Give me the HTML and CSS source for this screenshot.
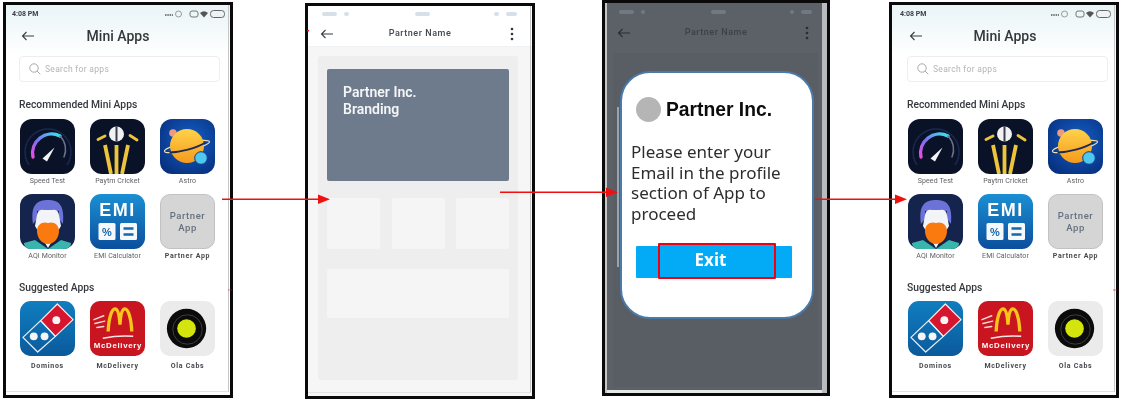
FILE: index.html
```html
<!DOCTYPE html>
<html lang="en">
<head>
<meta charset="utf-8">
<title>Partner mini app flow</title>
<link rel="stylesheet" href="styles.css">
</head>
<body>
<svg class="defs" width="0" height="0" aria-hidden="true">
  <defs>
    <linearGradient id="gaugeGrad" gradientUnits="userSpaceOnUse" x1="12" y1="38" x2="40" y2="14">
      <stop offset="0" stop-color="#f04be0"/><stop offset=".4" stop-color="#7b6ff5"/><stop offset="1" stop-color="#35ecec"/>
    </linearGradient>
    <linearGradient id="blueGrad" x1="0" y1="0" x2="0" y2="1">
      <stop offset="0" stop-color="#1b8fd2"/><stop offset="1" stop-color="#0b4f9e"/>
    </linearGradient>
    <linearGradient id="domGrad" x1="0" y1="0" x2="0" y2="1">
      <stop offset="0" stop-color="#0f7ebf"/><stop offset="1" stop-color="#0b5a9c"/>
    </linearGradient>
    <radialGradient id="astroGrad" cx=".55" cy=".4" r=".7">
      <stop offset="0" stop-color="#1560c8"/><stop offset="1" stop-color="#07307f"/>
    </radialGradient>
    <linearGradient id="planetGrad" x1="0" y1="0" x2="0" y2="1">
      <stop offset="0" stop-color="#ffd24a"/><stop offset="1" stop-color="#f59a1c"/>
    </linearGradient>
    <symbol id="i-speed" viewBox="0 0 55 55">
      <rect width="55" height="55" rx="12" fill="#0a1228"/>
      <path d="M9 46A23 23 0 1 1 47 46" fill="none" stroke="#1a2850" stroke-width="1.500"/>
      <path d="M13 38A19 19 0 0 1 40 17" fill="none" stroke="url(#gaugeGrad)" stroke-width="3.400" stroke-linecap="round"/>
      <path d="M40 17A19 19 0 0 1 44 38" fill="none" stroke="#69738c" stroke-width="1.500" stroke-linecap="round"/>
      <path d="M22.500 39.500 34.500 28.500 27 42.500Z" fill="#f4f4f4"/>
    </symbol>
    <symbol id="i-cricket" viewBox="0 0 55 55">
      <rect width="55" height="55" rx="12" fill="#0a1228"/>
      <circle cx="26.500" cy="15" r="7.500" fill="#f2f2f2"/>
      <path d="M26.500 7.500V22.500" stroke="#3a3f50" stroke-width="2"/>
      <path d="M15 17 8 20.500M40 16.500 47 21" stroke="#eec43a" stroke-width="2.800" stroke-linecap="round"/>
      <path d="M15 26 21 55M26.500 26V55M38 26 32 55" stroke="#eec43a" stroke-width="3.800"/>
    </symbol>
    <symbol id="i-astro" viewBox="0 0 55 55">
      <rect width="55" height="55" rx="12" fill="url(#astroGrad)"/>
      <circle cx="13" cy="14" r="3.800" fill="#ee9a80"/>
      <ellipse cx="27" cy="27.500" rx="23" ry="4" transform="rotate(-12 27 27.500)" fill="none" stroke="#efe0b8" stroke-width="1.200"/>
      <circle cx="27" cy="27" r="17" fill="url(#planetGrad)"/>
      <path d="M9.500 33.500C20 33 36 29.500 45.500 23.500" fill="none" stroke="#1c2a50" stroke-width="1.900"/>
      <circle cx="41" cy="39" r="6.300" fill="#4fc8ef" stroke="#0b3c90" stroke-width="1"/>
    </symbol>
    <symbol id="i-aqi" viewBox="0 0 55 55">
      <rect width="55" height="55" rx="12" fill="#15244c"/>
      <path d="M4 49 15 46 28 55 41 46 51 49V50Q50 55 43 55H12Q5 55 4 50Z" fill="#39b5ad"/>
      <path d="M13 30C10 10 18 6 28 6 38 6 45 10 43 30L39 25V17H17V25Z" fill="#6b72d8"/>
      <path d="M17 21Q18 15 24 16H32Q38 15 39 21L41 32 28 54 15 32Z" fill="#f2f4f8"/>
      <path d="M17 37C17 30 23 27 28 29 33 27 39 30 39 37 39 44 34 50 28 50 22 50 17 44 17 37Z" fill="#fb7a10"/>
    </symbol>
    <symbol id="i-emi" viewBox="0 0 55 55">
      <rect width="55" height="55" rx="11" fill="url(#blueGrad)"/>
      <text x="27.500" y="22" text-anchor="middle" class="emi-text">EMI</text>
      <rect x="8.500" y="29" width="17" height="17" rx="1.500" fill="#f6f9fc"/>
      <rect x="30" y="29" width="17" height="17" rx="1.500" fill="#f6f9fc"/>
      <text x="17" y="41.500" text-anchor="middle" class="emi-pct">%</text>
      <path d="M33.500 34.500H43.500M33.500 40.500H43.500" stroke="#1668ad" stroke-width="2.400"/>
    </symbol>
    <symbol id="i-dominos" viewBox="0 0 56 56">
      <rect width="56" height="56" rx="11" fill="url(#domGrad)"/>
      <path d="M38 3 54 19 36 36 21 20Z" fill="#d6162f" stroke="#f0f0f0" stroke-width="1.300" stroke-linejoin="round"/>
      <circle cx="37" cy="19.500" r="4" fill="#f6f6f6"/>
      <path d="M21 20 36 36 18 52 3 37Z" fill="none" stroke="#e8eff5" stroke-width="1.300" stroke-linejoin="round"/>
      <circle cx="14" cy="36" r="4" fill="#f6f6f6"/>
      <circle cx="25" cy="36" r="4" fill="#f6f6f6"/>
    </symbol>
    <symbol id="i-mcd" viewBox="0 0 56 56">
      <rect width="56" height="56" rx="10" fill="#c8151f"/>
      <path d="M18.500 31C19 18 22 8 25.500 8 29 8 30 16 30.500 24 31 16 32 8 35.500 8 39 8 42 18 42.500 31" fill="none" stroke="#f8c51c" stroke-width="3.400"/>
      <path d="M4 19 14 15M5 23 15 20.500M7 27 14 26" stroke="#f6d8d8" stroke-width="1.500" stroke-linecap="round"/>
      <path d="M13 38C23 36 34 35 44 36" fill="none" stroke="#f8e7e7" stroke-width="1.500"/>
      <text x="28.500" y="47.500" text-anchor="middle" class="mcd-text">McDelivery</text>
    </symbol>
    <symbol id="i-ola" viewBox="0 0 56 56">
      <rect width="56" height="56" rx="10" fill="#ebebeb"/>
      <circle cx="27" cy="28" r="20" fill="#0b0b0b"/>
      <circle cx="28" cy="29" r="15" fill="none" stroke="#4a4a4a" stroke-width=".8"/>
      <circle cx="27" cy="28" r="9.500" fill="#d3e50c"/>
    </symbol>
    <symbol id="i-back" viewBox="0 0 14 10">
      <path d="M13 5H1.500M5.500 1 1.500 5 5.500 9" fill="none" stroke="currentColor" stroke-width="1.100"/>
    </symbol>
    <symbol id="i-kebab" viewBox="0 0 4 14">
      <circle cx="2" cy="2" r="1.300" fill="currentColor"/>
      <circle cx="2" cy="7" r="1.300" fill="currentColor"/>
      <circle cx="2" cy="12" r="1.300" fill="currentColor"/>
    </symbol>
    <symbol id="i-status" viewBox="0 0 60 8">
      <path d="M0 5H8" stroke="#555" stroke-width="1.500" stroke-dasharray="1.500 .8"/>
      <circle cx="13.500" cy="4" r="3" fill="none" stroke="#9a9a9a"/>
      <rect x="25" y="1" width="8" height="6" rx="2" fill="none" stroke="#777"/>
      <path d="M35 3Q39 -.5 43 3L39 7.500Z" fill="#555"/>
      <rect x="45.500" y=".5" width="14" height="7" rx="3" fill="#eef2f3" stroke="#666"/>
    </symbol>
  </defs>
</svg>

<main class="board">
  <section class="phone phone-first">
    <div class="status"><span class="time">4:08 PM</span><svg class="status-icons"><use href="#i-status"/></svg></div>
    <header class="bar"><svg class="back"><use href="#i-back"/></svg><h1 class="bar-title">Mini Apps</h1></header>
    <div class="search"><svg class="search-icon" viewBox="0 0 12 12"><circle cx="5" cy="5" r="4.200"/><path d="M8 8 11.300 11.300"/></svg><span>Search for apps</span></div>
    <h2 class="group">Recommended Mini Apps</h2>
    <div class="apps">
      <div class="app"><svg class="icon"><use href="#i-speed"/></svg><span>Speed Test</span></div>
      <div class="app"><svg class="icon"><use href="#i-cricket"/></svg><span>Paytm Cricket</span></div>
      <div class="app"><svg class="icon"><use href="#i-astro"/></svg><span>Astro</span></div>
      <div class="app"><svg class="icon"><use href="#i-aqi"/></svg><span>AQI Monitor</span></div>
      <div class="app"><svg class="icon"><use href="#i-emi"/></svg><span>EMI Calculator</span></div>
      <div class="app app-strong"><div class="icon partner-icon">Partner<br>App</div><span>Partner App</span></div>
    </div>
    <h2 class="group group-next">Suggested Apps</h2>
    <div class="apps apps-next">
      <div class="app app-strong"><svg class="icon"><use href="#i-dominos"/></svg><span>Dominos</span></div>
      <div class="app app-strong"><svg class="icon"><use href="#i-mcd"/></svg><span>McDelivery</span></div>
      <div class="app app-strong"><svg class="icon"><use href="#i-ola"/></svg><span>Ola Cabs</span></div>
    </div>
  </section>

  <section class="phone phone-second">
    <div class="pills"><i class="pill pill-l"></i><i class="pill pill-s"></i><i class="pill pill-l pill-mid"></i><i class="pill pill-s pill-end"></i><i class="pill pill-m"></i></div>
    <header class="partner-bar"><svg class="back"><use href="#i-back"/></svg><h2 class="partner-title">Partner Name</h2><svg class="kebab"><use href="#i-kebab"/></svg></header>
    <div class="panel">
      <div class="banner">Partner Inc.<br>Branding</div>
      <div class="tiles"><div class="tile"></div><div class="tile"></div><div class="tile"></div></div>
      <div class="tile tile-wide"></div>
    </div>
  </section>

  <section class="phone phone-second phone-dim">
    <div class="pills"><i class="pill pill-l"></i><i class="pill pill-s"></i><i class="pill pill-l pill-mid"></i><i class="pill pill-s pill-end"></i><i class="pill pill-m"></i></div>
    <header class="partner-bar"><svg class="back"><use href="#i-back"/></svg><h2 class="partner-title">Partner Name</h2><svg class="kebab"><use href="#i-kebab"/></svg></header>
    <div class="ghost"></div>
    <i class="ghost-edge"></i>
    <div class="dialog">
      <div class="dialog-head"><i class="avatar"></i><strong>Partner Inc.</strong></div>
      <p class="dialog-text">Please enter your Email in the profile section of App to proceed</p>
      <div class="exit"><span class="exit-label">Exit</span></div>
    </div>
  </section>

  <section class="phone phone-last">
    <div class="status"><span class="time">4:08 PM</span><svg class="status-icons"><use href="#i-status"/></svg></div>
    <header class="bar"><svg class="back"><use href="#i-back"/></svg><h2 class="bar-title">Mini Apps</h2></header>
    <div class="search"><svg class="search-icon" viewBox="0 0 12 12"><circle cx="5" cy="5" r="4.200"/><path d="M8 8 11.300 11.300"/></svg><span>Search for apps</span></div>
    <h2 class="group">Recommended Mini Apps</h2>
    <div class="apps">
      <div class="app"><svg class="icon"><use href="#i-speed"/></svg><span>Speed Test</span></div>
      <div class="app"><svg class="icon"><use href="#i-cricket"/></svg><span>Paytm Cricket</span></div>
      <div class="app"><svg class="icon"><use href="#i-astro"/></svg><span>Astro</span></div>
      <div class="app"><svg class="icon"><use href="#i-aqi"/></svg><span>AQI Monitor</span></div>
      <div class="app"><svg class="icon"><use href="#i-emi"/></svg><span>EMI Calculator</span></div>
      <div class="app app-strong"><div class="icon partner-icon">Partner<br>App</div><span>Partner App</span></div>
    </div>
    <h2 class="group group-next">Suggested Apps</h2>
    <div class="apps apps-next">
      <div class="app app-strong"><svg class="icon"><use href="#i-dominos"/></svg><span>Dominos</span></div>
      <div class="app app-strong"><svg class="icon"><use href="#i-mcd"/></svg><span>McDelivery</span></div>
      <div class="app app-strong"><svg class="icon"><use href="#i-ola"/></svg><span>Ola Cabs</span></div>
    </div>
  </section>

  <svg class="arrows" viewBox="0 0 1126 402" aria-hidden="true">
    <g fill="#f01010">
      <rect x="222" y="198.500" width="98" height="1.500"/><path d="M318 194.500 330 199.300 318 204Z"/>
      <rect x="500" y="191.500" width="108" height="1.500"/><path d="M606 187.500 618 192.300 606 197Z"/>
      <rect x="815" y="198.500" width="82" height="1.500"/><path d="M895 194.500 907 199.300 895 204Z"/>
      <rect x="307" y="30" width="2" height="1.500"/>
      <rect x="228" y="289.500" width="4" height="1" opacity=".5"/>
      <rect x="1113" y="289.500" width="4" height="1" opacity=".6"/>
    </g>
  </svg>
</main>
</body>
</html>
```
FILE: styles.css
```css
* { box-sizing: border-box; }
html, body { margin: 0; padding: 0; background: #fff; }
body { width: 1126px; height: 402px; overflow: hidden; font-family: Roboto, "Liberation Sans", sans-serif; }
.defs { position: absolute; }
.emi-text { font: 700 18px "Liberation Sans", sans-serif; fill: #fff; letter-spacing: 1.500px; }
.emi-pct { font: 700 11px "Liberation Sans", sans-serif; fill: #1668ad; }
.mcd-text { font: 700 8px "Liberation Sans", sans-serif; fill: #fff; }

.board { position: relative; display: flex; align-items: flex-start; width: 1126px; height: 402px; }
.arrows { position: absolute; inset: 0; width: 1126px; height: 402px; pointer-events: none; }

.phone { position: relative; flex: none; width: 230px; height: 396px; border: 3px solid #0a0a0a; background: #fff; filter: blur(.45px); overflow: hidden; color: #33363c; }
.phone::after { content: ""; position: absolute; left: 0; right: 1px; top: 0; bottom: 3px; border-right: 1px solid #c6c6c6; border-bottom: 1px solid #e2e2e2; pointer-events: none; }
.phone-first { margin: 2px 0 0 3px; }
.phone-second { margin: 3px 0 0 72px; background: #f6f6f6; }
.phone-dim { width: 228px; margin: 0 0 0 67px; background: #5b6167; color: #2f343a; box-shadow: inset 2px 0 0 #c4c6c8, inset -5px 0 0 #b9bcbf, inset 0 -3px 0 #e6e6e6; }
.phone-dim::after { display: none; }
.phone-last { margin: 2px 0 0 59px; padding-left: 2px; }

.phone-first::before, .phone-last::before { content: ""; position: absolute; left: 0; right: 0; top: 0; height: 50px; background: linear-gradient(#e9f4f6, #fff); }

/* Mini apps screen */
.status { position: relative; display: flex; justify-content: space-between; align-items: center; height: 18px; padding: 0 5px 0 6px; }
.time { font-size: 7px; font-weight: 700; color: #3d4046; }
.status-icons { width: 60px; height: 8px; }
.bar { position: relative; display: flex; align-items: center; height: 26px; padding-left: 15px; }
.back { flex: none; width: 14px; height: 10px; color: #3a3d42; }
.bar-title { position: absolute; left: 0; right: 0; margin: 0; text-align: center; font-size: 14px; font-weight: 500; color: #34373c; }
.search { display: flex; align-items: center; gap: 4px; width: 201px; height: 26px; margin: 7px 0 0 13px; padding-left: 9px; border: 1px solid #eeeeee; border-radius: 4px; font-size: 8.500px; letter-spacing: .3px; color: #b2b5b9; }
.search-icon { flex: none; width: 12px; height: 12px; fill: none; stroke: #a6a9ad; stroke-width: 1; }
.group { margin: 16px 0 0 13px; font-size: 10.300px; font-weight: 500; line-height: 14px; color: #35383d; }
.group-next { margin-top: 12px; }
.apps { display: grid; grid-template-columns: repeat(3, 55px); column-gap: 15px; margin: 7px 0 0 14px; }
.apps-next { margin-top: 6px; }
.app { display: flex; flex-direction: column; align-items: center; height: 75px; font-size: 7px; line-height: 13px; letter-spacing: .1px; color: #5b5e63; white-space: nowrap; }
.app span { margin-top: 1px; }
.app-strong { font-weight: 700; letter-spacing: .7px; color: #45484d; }
.apps-next .app span { margin-top: 4px; }
.icon { flex: none; width: 55px; height: 55px; }
.partner-icon { display: flex; align-items: center; justify-content: center; text-align: center; background: #d5d5d5; border: 1px solid #c2c2c2; border-radius: 10px; font-size: 9.500px; font-weight: 500; line-height: 11.500px; letter-spacing: .55px; color: #66707e; }

/* Partner screen */
.pills { display: flex; gap: 7px; height: 19px; padding: 6px 15px 0 14px; background: #fff; }
.pill { display: block; height: 4px; border-radius: 2px; background: #d6e0ea; }
.pill-l { width: 16px; }
.pill-s { width: 5px; }
.pill-m { width: 12px; }
.pill-mid { margin-left: 59px; }
.pill-end { margin-left: 57px; }
.partner-bar { position: relative; display: flex; align-items: center; justify-content: space-between; height: 22px; padding: 0 18px 4px 12px; background: #fff; border-bottom: 1px solid #eff2f5; }
.partner-title { position: absolute; left: 0; right: 0; top: 3px; margin: 0; text-align: center; font-size: 9px; font-weight: 500; letter-spacing: .55px; color: #44474e; }
.kebab { width: 4px; height: 14px; color: #333640; }
.panel { display: flex; flex-direction: column; gap: 20px; width: 200px; height: 324px; margin: 9px 0 0 10px; padding: 13px 9px; border-radius: 3px; background: #eeeeee; }
.banner { flex: none; height: 112px; margin-bottom: -3px; padding: 15px 16px; border-radius: 2px; background: #6e7b8d; color: #f5f6f8; font-size: 14px; font-weight: 600; line-height: 17px; }
.tiles { display: flex; justify-content: space-between; }
.tile { flex: none; width: 53px; height: 51px; border-radius: 2px; background: #f5f5f5; }
.tile-wide { width: 100%; height: 49px; }

/* Dialog screen */
.phone-dim .pills { height: 21px; padding-top: 7px; background: transparent; }
.phone-dim .pill { background: #707a84; }
.phone-dim .partner-bar { background: transparent; border-bottom-color: transparent; }
.phone-dim .partner-title { color: #3c4147; }
.phone-dim .back, .phone-dim .kebab { color: #2a2e33; }
.ghost { position: absolute; left: 8px; top: 50px; width: 205px; height: 334px; background: #585e64; }
.ghost-edge { position: absolute; left: 12px; top: 104px; width: 2px; height: 160px; background: #9aa2aa; }
.dialog { position: absolute; left: 15px; top: 68px; width: 194px; height: 248px; padding: 23px 9px 0 9px; border: 2px solid #4a7aa8; border-radius: 30px; background: #fff; color: #2d2d2d; }
.dialog-head { display: flex; align-items: center; gap: 5px; margin: 1px 0 0 5px; font-family: "Liberation Sans", sans-serif; font-size: 19.300px; color: #0c0c0c; }
.avatar { flex: none; width: 25px; height: 25px; border-radius: 50%; background: #b5b5b5; }
.dialog-text { margin: 20px 0 0; font-family: "Noto Sans", "Open Sans", sans-serif; font-size: 17px; line-height: 20.700px; }
.exit { position: relative; display: flex; justify-content: center; width: 156px; height: 32px; margin: 21px 0 0 5px; background: #03aaf6; border-radius: 1px; }
.exit-label { width: 118px; height: 36px; margin: -3px 0 0 6px; padding-right: 13px; border: 2.500px solid #f00010; border-radius: 1px; text-align: center; font-family: "Noto Sans", "Open Sans", sans-serif; font-size: 17px; font-weight: 700; line-height: 29px; color: #fff; background: #03aaf6; }
```
